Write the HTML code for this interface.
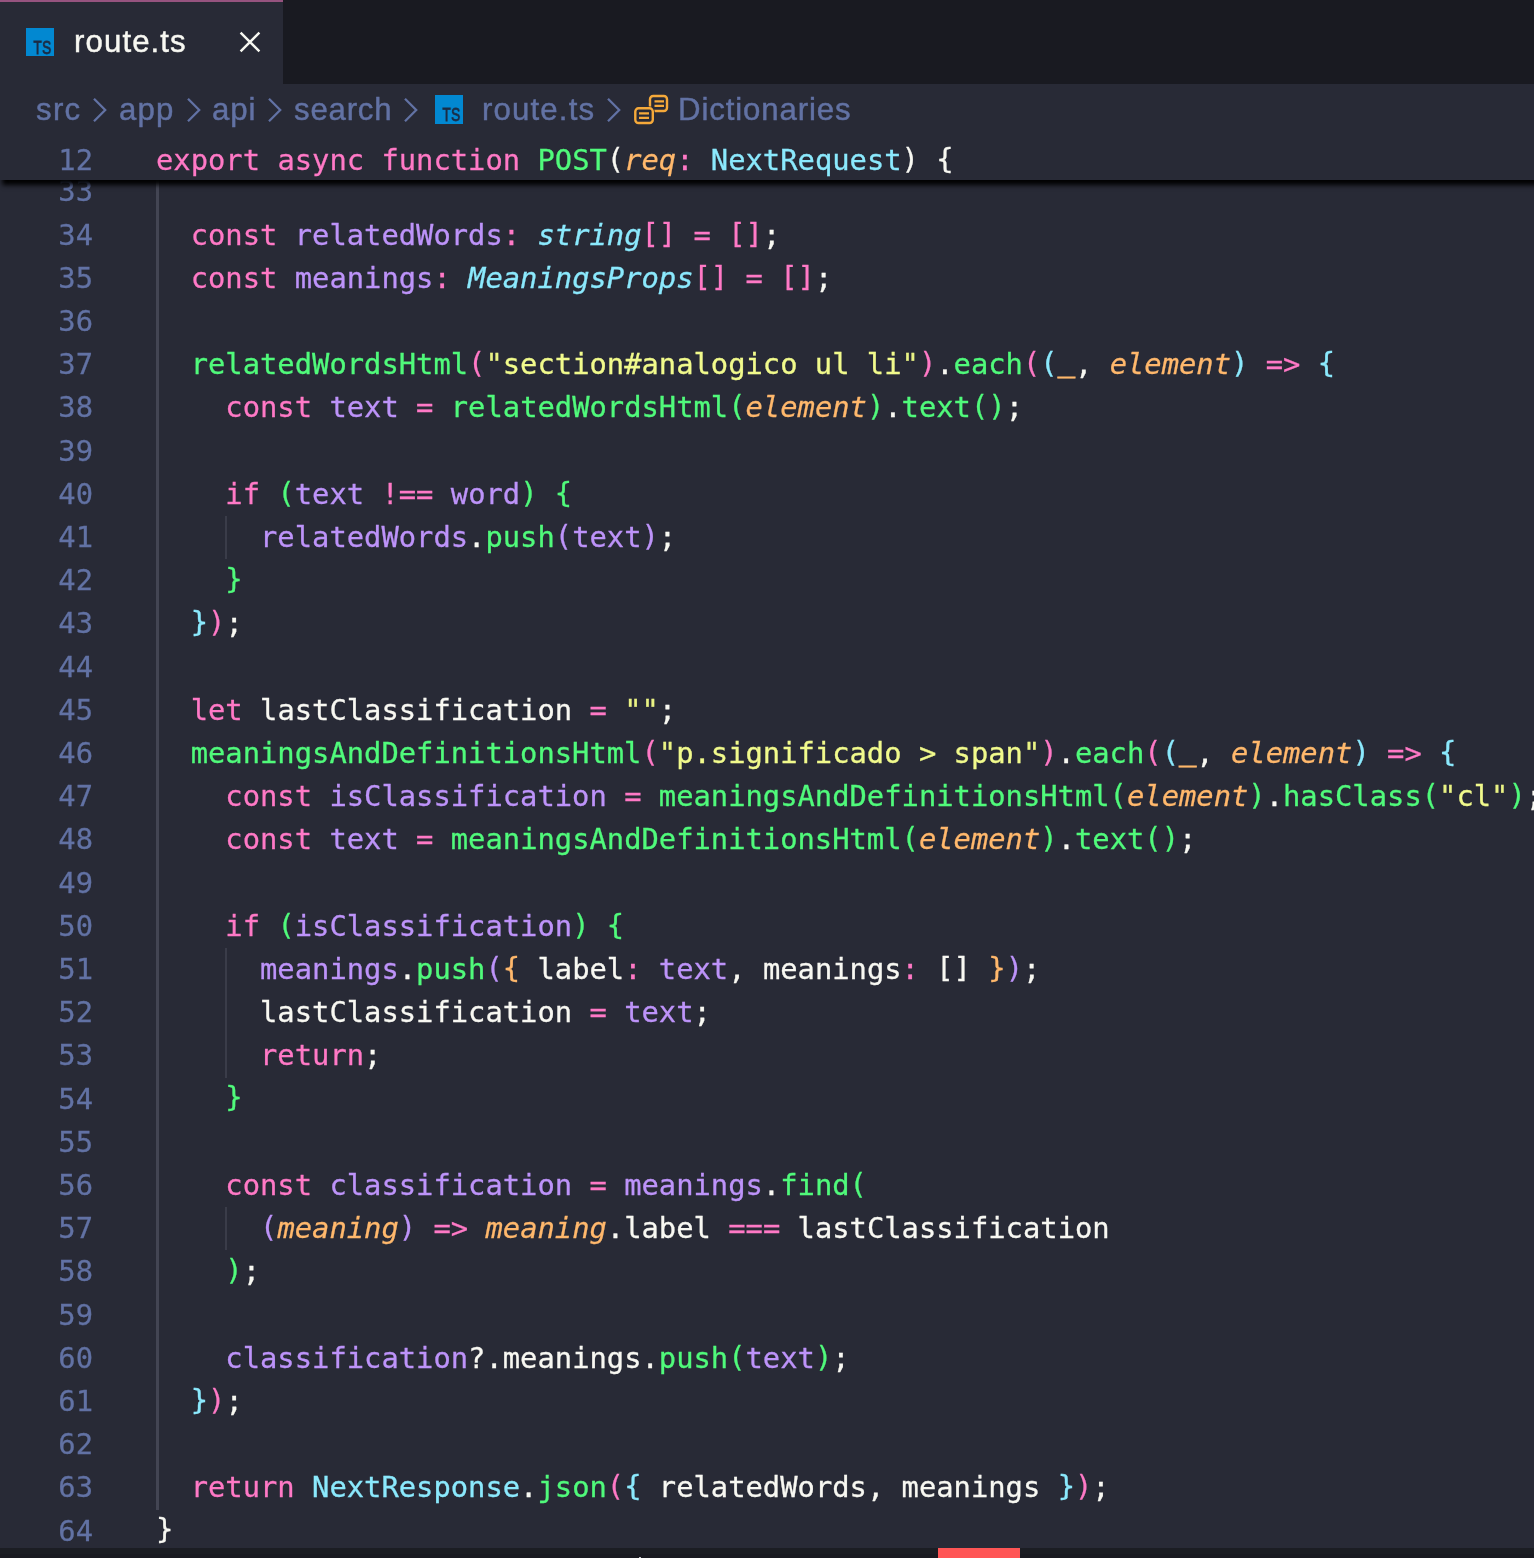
<!DOCTYPE html>
<html lang="en">
<head>
<meta charset="utf-8">
<title>route.ts</title>
<style>
html,body{margin:0;padding:0;}
html{width:1534px;height:1558px;overflow:hidden;background:#282a36;}
body{width:1534px;height:1558px;background:#282a36;overflow:hidden;position:relative;font-family:"Liberation Sans",sans-serif;}
#root{position:absolute;left:0;top:0;width:1534px;height:1558px;overflow:hidden;background:#282a36;}
#tabs{position:absolute;left:0;top:0;width:1534px;height:84px;background:#191a21;}
#tab{position:absolute;left:0;top:0;width:283px;height:84px;background:#282a36;border-top:2px solid #96537f;box-sizing:border-box;}
.ts{position:absolute;width:28px;height:28.4px;background:#0288d1;}
.ts span{will-change:transform;position:absolute;right:2px;bottom:-1px;font:normal 18.5px/18.5px "Liberation Sans",sans-serif;color:#1c2c44;letter-spacing:0.5px;transform:scaleX(0.74);transform-origin:100% 100%;-webkit-text-stroke:0.8px #1c2c44;}
#tabname{will-change:transform;position:absolute;left:74px;top:20px;-webkit-text-stroke:0.45px currentColor;letter-spacing:1.1px;font-size:31.2px;line-height:40px;color:#f8f8f2;white-space:nowrap;}
#close{position:absolute;left:238px;top:28px;width:24px;height:24px;}
#crumbs{position:absolute;left:0;top:84px;width:1534px;height:54px;background:#282a36;color:#6272a4;font-size:31.2px;}
#crumbs .t{will-change:transform;-webkit-text-stroke:0.45px currentColor;position:absolute;top:6px;line-height:40px;white-space:nowrap;}
#crumbs svg.ch{position:absolute;top:13px;width:16px;height:26px;}
#editor{position:absolute;left:0;top:180px;width:1534px;height:1368px;overflow:hidden;}
.ln,.cl,#sticky .sl,#sticky .sn{position:absolute;font-family:"DejaVu Sans Mono","Liberation Mono",monospace;font-size:28.8px;line-height:43.2px;height:43.2px;white-space:pre;-webkit-text-stroke:0.28px currentColor;}
.ln,#sticky .sn{left:0;width:93px;text-align:right;color:#6272a4;}
.cl,#sticky .sl{left:156px;color:#f8f8f2;}
#sticky .sl,#sticky .sn{will-change:transform;}
#sticky .sn{left:3px}#sticky .sl{left:159px}
#lines{will-change:transform;position:absolute;left:0;top:-180px;width:1534px;height:1558px;}
.g1{position:absolute;left:156.1px;width:2.6px;background:#434553;}
.g2{position:absolute;left:225px;width:2.4px;height:43.2px;background:#3a3c49;}
#sticky{position:absolute;left:-3px;top:137px;width:1600px;height:43px;background:#282a36;box-shadow:0 9.6px 4.8px -4.8px #000;}
#bottom{position:absolute;left:0;top:1548px;width:1534px;height:10px;background:linear-gradient(#1b1d23 0,#1b1d23 6px,#191a21 6px);}
#dot{position:absolute;left:639px;top:9px;width:2px;height:1px;background:#c8c8cc;}
#red{position:absolute;left:938px;top:0;width:82px;height:10px;background:#ff5555;}
.p{color:#ff79c6}.w{color:#f8f8f2}.g{color:#50fa7b}.c{color:#8be9fd}.u{color:#bd93f9}.o{color:#ffb86c}.y{color:#f1fa8c}.q{color:#e9f284}
.i{font-style:italic}
.b{position:relative;top:-1.3px}
.k{position:relative;top:-0.7px}
.us{position:relative;top:-3.2px;-webkit-text-stroke:0.9px currentColor}
</style>
</head>
<body>
<div id="root">
<div id="editor">
<div id="lines">
<div class="g1" style="top:170px;height:1339.6px"></div>
<div class="g2" style="top:516.0px"></div>
<div class="g2" style="top:948.0px"></div>
<div class="g2" style="top:991.2px"></div>
<div class="g2" style="top:1034.4px"></div>
<div class="g2" style="top:1207.2px"></div>
<div class="ln" style="top:170.4px">33</div><div class="cl" style="top:170.4px"></div>
<div class="ln" style="top:213.6px">34</div><div class="cl" style="top:213.6px">  <span class="p">const</span> <span class="u">relatedWords</span><span class="p">:</span> <span class="c i">string</span><span class="p k">[]</span> <span class="p">=</span> <span class="p k">[]</span><span class="w">;</span></div>
<div class="ln" style="top:256.8px">35</div><div class="cl" style="top:256.8px">  <span class="p">const</span> <span class="u">meanings</span><span class="p">:</span> <span class="c i">MeaningsProps</span><span class="p k">[]</span> <span class="p">=</span> <span class="p k">[]</span><span class="w">;</span></div>
<div class="ln" style="top:300.0px">36</div><div class="cl" style="top:300.0px"></div>
<div class="ln" style="top:343.2px">37</div><div class="cl" style="top:343.2px">  <span class="g">relatedWordsHtml</span><span class="p b">(</span><span class="q">"</span><span class="y">section#analogico ul li</span><span class="q">"</span><span class="p b">)</span><span class="w">.</span><span class="g">each</span><span class="p b">(</span><span class="c b">(</span><span class="o us">_</span><span class="w">,</span> <span class="o i">element</span><span class="c b">)</span> <span class="p">=&gt;</span> <span class="c b">{</span></div>
<div class="ln" style="top:386.4px">38</div><div class="cl" style="top:386.4px">    <span class="p">const</span> <span class="u">text</span> <span class="p">=</span> <span class="g">relatedWordsHtml</span><span class="g b">(</span><span class="o i">element</span><span class="g b">)</span><span class="w">.</span><span class="g">text</span><span class="g b">()</span><span class="w">;</span></div>
<div class="ln" style="top:429.6px">39</div><div class="cl" style="top:429.6px"></div>
<div class="ln" style="top:472.8px">40</div><div class="cl" style="top:472.8px">    <span class="p">if</span> <span class="g b">(</span><span class="u">text</span> <span class="p">!==</span> <span class="u">word</span><span class="g b">)</span> <span class="g b">{</span></div>
<div class="ln" style="top:516.0px">41</div><div class="cl" style="top:516.0px">      <span class="u">relatedWords</span><span class="w">.</span><span class="g">push</span><span class="u b">(</span><span class="u">text</span><span class="u b">)</span><span class="w">;</span></div>
<div class="ln" style="top:559.2px">42</div><div class="cl" style="top:559.2px">    <span class="g b">}</span></div>
<div class="ln" style="top:602.4px">43</div><div class="cl" style="top:602.4px">  <span class="c b">}</span><span class="p b">)</span><span class="w">;</span></div>
<div class="ln" style="top:645.6px">44</div><div class="cl" style="top:645.6px"></div>
<div class="ln" style="top:688.8px">45</div><div class="cl" style="top:688.8px">  <span class="p">let</span> <span class="w">lastClassification</span> <span class="p">=</span> <span class="q">""</span><span class="w">;</span></div>
<div class="ln" style="top:732.0px">46</div><div class="cl" style="top:732.0px">  <span class="g">meaningsAndDefinitionsHtml</span><span class="p b">(</span><span class="q">"</span><span class="y">p.significado &gt; span</span><span class="q">"</span><span class="p b">)</span><span class="w">.</span><span class="g">each</span><span class="p b">(</span><span class="c b">(</span><span class="o us">_</span><span class="w">,</span> <span class="o i">element</span><span class="c b">)</span> <span class="p">=&gt;</span> <span class="c b">{</span></div>
<div class="ln" style="top:775.2px">47</div><div class="cl" style="top:775.2px">    <span class="p">const</span> <span class="u">isClassification</span> <span class="p">=</span> <span class="g">meaningsAndDefinitionsHtml</span><span class="g b">(</span><span class="o i">element</span><span class="g b">)</span><span class="w">.</span><span class="g">hasClass</span><span class="g b">(</span><span class="q">"</span><span class="y">cl</span><span class="q">"</span><span class="g b">)</span><span class="w">;</span></div>
<div class="ln" style="top:818.4px">48</div><div class="cl" style="top:818.4px">    <span class="p">const</span> <span class="u">text</span> <span class="p">=</span> <span class="g">meaningsAndDefinitionsHtml</span><span class="g b">(</span><span class="o i">element</span><span class="g b">)</span><span class="w">.</span><span class="g">text</span><span class="g b">()</span><span class="w">;</span></div>
<div class="ln" style="top:861.6px">49</div><div class="cl" style="top:861.6px"></div>
<div class="ln" style="top:904.8px">50</div><div class="cl" style="top:904.8px">    <span class="p">if</span> <span class="g b">(</span><span class="u">isClassification</span><span class="g b">)</span> <span class="g b">{</span></div>
<div class="ln" style="top:948.0px">51</div><div class="cl" style="top:948.0px">      <span class="u">meanings</span><span class="w">.</span><span class="g">push</span><span class="u b">(</span><span class="o b">{</span> <span class="w">label</span><span class="p">:</span> <span class="u">text</span><span class="w">,</span> <span class="w">meanings</span><span class="p">:</span> <span class="w k">[]</span> <span class="o b">}</span><span class="u b">)</span><span class="w">;</span></div>
<div class="ln" style="top:991.2px">52</div><div class="cl" style="top:991.2px">      <span class="w">lastClassification</span> <span class="p">=</span> <span class="u">text</span><span class="w">;</span></div>
<div class="ln" style="top:1034.4px">53</div><div class="cl" style="top:1034.4px">      <span class="p">return</span><span class="w">;</span></div>
<div class="ln" style="top:1077.6px">54</div><div class="cl" style="top:1077.6px">    <span class="g b">}</span></div>
<div class="ln" style="top:1120.8px">55</div><div class="cl" style="top:1120.8px"></div>
<div class="ln" style="top:1164.0px">56</div><div class="cl" style="top:1164.0px">    <span class="p">const</span> <span class="u">classification</span> <span class="p">=</span> <span class="u">meanings</span><span class="w">.</span><span class="g">find</span><span class="g b">(</span></div>
<div class="ln" style="top:1207.2px">57</div><div class="cl" style="top:1207.2px">      <span class="u b">(</span><span class="o i">meaning</span><span class="u b">)</span> <span class="p">=&gt;</span> <span class="o i">meaning</span><span class="w">.</span><span class="w">label</span> <span class="p">===</span> <span class="w">lastClassification</span></div>
<div class="ln" style="top:1250.4px">58</div><div class="cl" style="top:1250.4px">    <span class="g b">)</span><span class="w">;</span></div>
<div class="ln" style="top:1293.6px">59</div><div class="cl" style="top:1293.6px"></div>
<div class="ln" style="top:1336.8px">60</div><div class="cl" style="top:1336.8px">    <span class="u">classification</span><span class="w">?.</span><span class="w">meanings</span><span class="w">.</span><span class="g">push</span><span class="g b">(</span><span class="u">text</span><span class="g b">)</span><span class="w">;</span></div>
<div class="ln" style="top:1380.0px">61</div><div class="cl" style="top:1380.0px">  <span class="c b">}</span><span class="p b">)</span><span class="w">;</span></div>
<div class="ln" style="top:1423.2px">62</div><div class="cl" style="top:1423.2px"></div>
<div class="ln" style="top:1466.4px">63</div><div class="cl" style="top:1466.4px">  <span class="p">return</span> <span class="c">NextResponse</span><span class="w">.</span><span class="g">json</span><span class="p b">(</span><span class="c b">{</span> <span class="w">relatedWords</span><span class="w">,</span> <span class="w">meanings</span> <span class="c b">}</span><span class="p b">)</span><span class="w">;</span></div>
<div class="ln" style="top:1509.6px">64</div><div class="cl" style="top:1509.6px"><span class="w b">}</span></div>
</div>
</div>
<div id="tabs">
  <div id="tab">
    <div class="ts" style="left:26px;top:25.8px"><span>TS</span></div>
    <div id="tabname">route.ts</div>
    <svg id="close" viewBox="0 0 24 24"><path d="M2.6 2.6 L21.4 21.4 M21.4 2.6 L2.6 21.4" stroke="#f8f8f2" stroke-width="2.4" fill="none"/></svg>
  </div>
</div>
<div id="crumbs">
  <div class="t" style="left:35.5px;letter-spacing:1.3px">src</div>
  <svg class="ch" style="left:92px" viewBox="0 0 16 26"><path d="M2 1.8 L13.2 13 L2 24.2" stroke="#6272a4" stroke-width="2.3" fill="none"/></svg>
  <div class="t" style="left:119px;letter-spacing:1.2px">app</div>
  <svg class="ch" style="left:185.9px" viewBox="0 0 16 26"><path d="M2 1.8 L13.2 13 L2 24.2" stroke="#6272a4" stroke-width="2.3" fill="none"/></svg>
  <div class="t" style="left:212px;letter-spacing:0.9px">api</div>
  <svg class="ch" style="left:267.2px" viewBox="0 0 16 26"><path d="M2 1.8 L13.2 13 L2 24.2" stroke="#6272a4" stroke-width="2.3" fill="none"/></svg>
  <div class="t" style="left:294px;letter-spacing:0.8px">search</div>
  <svg class="ch" style="left:403.1px" viewBox="0 0 16 26"><path d="M2 1.8 L13.2 13 L2 24.2" stroke="#6272a4" stroke-width="2.3" fill="none"/></svg>
  <div class="ts" style="left:434.5px;top:11.3px"><span>TS</span></div>
  <div class="t" style="left:482px;letter-spacing:1.15px">route.ts</div>
  <svg class="ch" style="left:606.2px" viewBox="0 0 16 26"><path d="M2 1.8 L13.2 13 L2 24.2" stroke="#6272a4" stroke-width="2.3" fill="none"/></svg>
  <svg style="position:absolute;left:633px;top:8px;width:36px;height:36px" viewBox="0 0 36 36"><g fill="none" stroke="#f5a93a" stroke-width="2.4"><rect x="17" y="4" width="17" height="15" rx="3.2"/><rect x="2.3" y="16.3" width="17.5" height="14.7" rx="3.2" fill="#282a36" stroke="#282a36" stroke-width="3.8"/><rect x="2.3" y="16.3" width="17.5" height="14.7" rx="3.2" fill="#282a36"/><path d="M21.5 9.4h9.5M21.5 13.9h9.5M6 21.4h10M6 25.9h10"/></g></svg>
  <div class="t" style="left:678px;letter-spacing:0.87px">Dictionaries</div>
</div>
<div id="sticky"><div class="sn" style="top:2px">12</div><div class="sl" style="top:2px"><span class="p">export</span> <span class="p">async</span> <span class="p">function</span> <span class="g">POST</span><span class="w b">(</span><span class="o i">req</span><span class="p">:</span> <span class="c">NextRequest</span><span class="w b">)</span> <span class="w b">{</span></div></div>
<div id="bottom"><div id="red"></div><div id="dot"></div></div>
</div>
</body>
</html>
